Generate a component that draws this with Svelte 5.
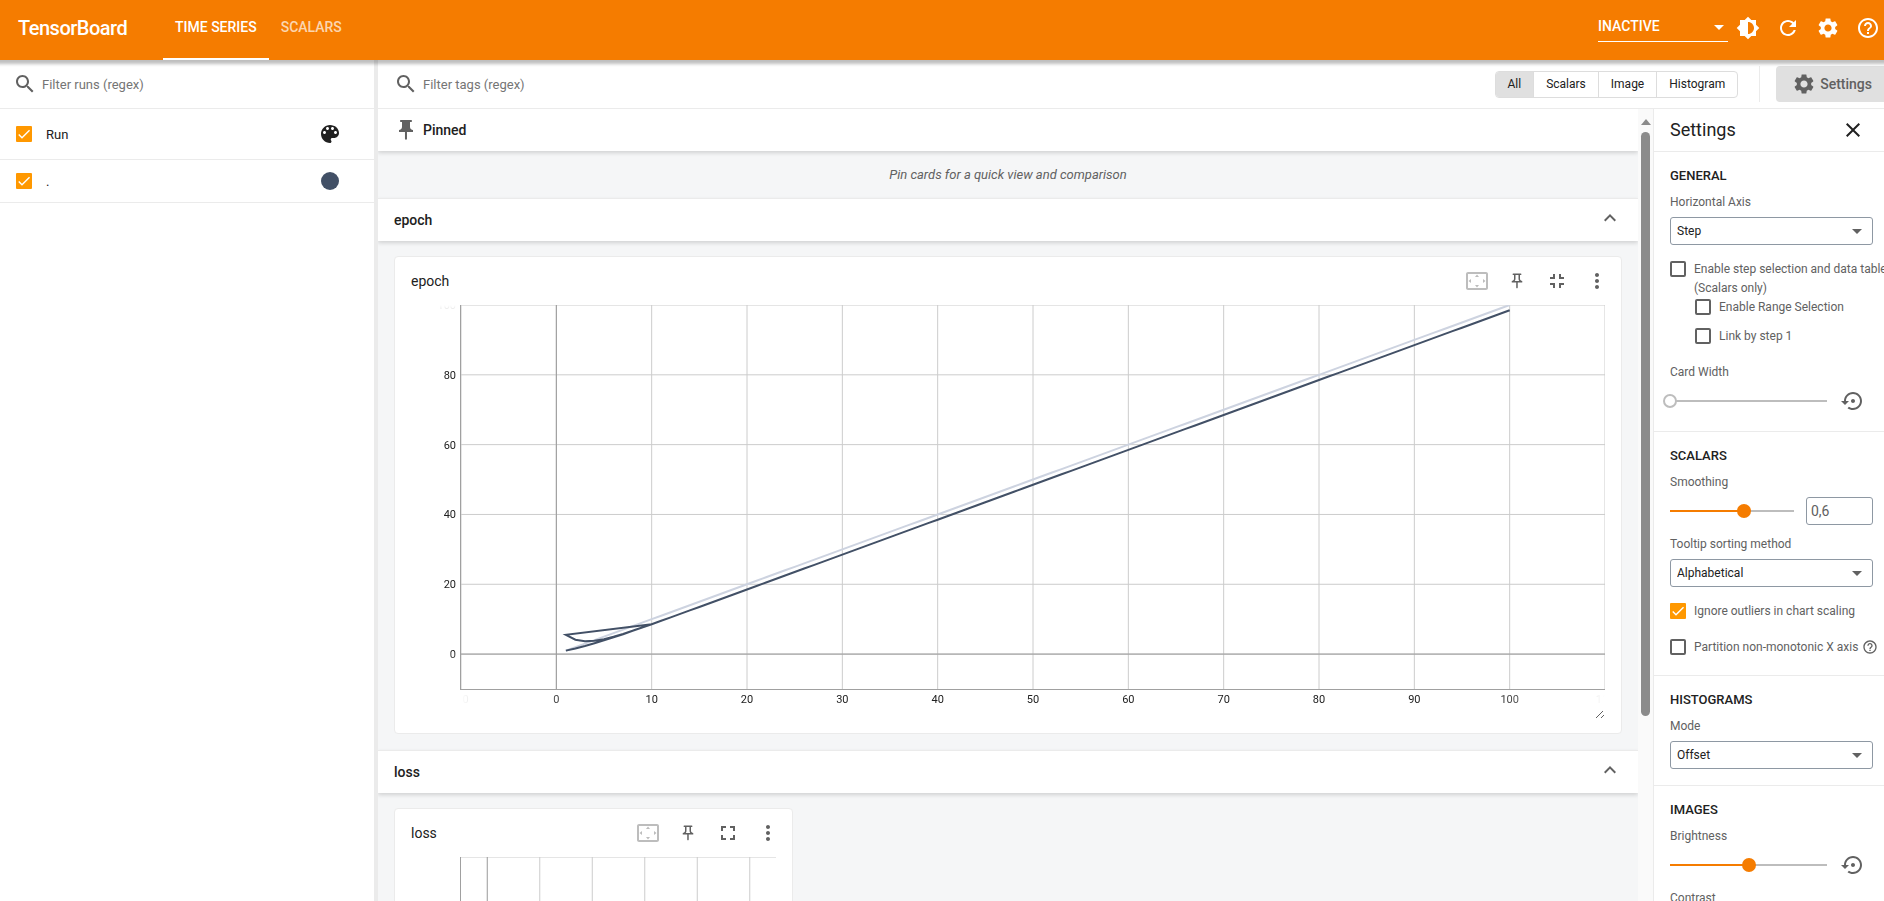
<script>
  const icons = {
    search: 'M15.5 14h-.79l-.28-.27C15.41 12.59 16 11.11 16 9.5 16 5.91 13.09 3 9.5 3S3 5.91 3 9.5 5.91 16 9.5 16c1.61 0 3.09-.59 4.23-1.57l.27.28v.79l5 4.99L20.49 19l-4.99-5zm-6 0C7.01 14 5 11.99 5 9.5S7.01 5 9.5 5 14 7.01 14 9.5 11.99 14 9.5 14z',
    brightness: 'M20 15.31L23.31 12 20 8.69V4h-4.69L12 .69 8.69 4H4v4.69L.69 12 4 15.31V20h4.69L12 23.31 15.31 20H20v-4.69zM12 18V6c3.31 0 6 2.69 6 6s-2.69 6-6 6z',
    refresh: 'M17.65 6.35C16.2 4.9 14.21 4 12 4c-4.42 0-7.99 3.58-7.99 8s3.57 8 7.99 8c3.73 0 6.84-2.55 7.73-6h-2.08c-.82 2.33-3.04 4-5.65 4-3.31 0-6-2.69-6-6s2.69-6 6-6c1.66 0 3.14.69 4.22 1.78L13 11h7V4l-2.35 2.35z',
    gear: 'M19.14 12.94c.04-.3.06-.61.06-.94 0-.32-.02-.64-.07-.94l2.03-1.58c.18-.14.23-.41.12-.61l-1.92-3.32c-.12-.22-.37-.29-.59-.22l-2.39.96c-.5-.38-1.03-.7-1.62-.94l-.36-2.54c-.04-.24-.24-.41-.48-.41h-3.84c-.24 0-.43.17-.47.41l-.36 2.54c-.59.24-1.13.57-1.62.94l-2.39-.96c-.22-.08-.47 0-.59.22L2.74 8.87c-.12.21-.08.47.12.61l2.03 1.58c-.05.3-.09.63-.09.94s.02.64.07.94l-2.03 1.58c-.18.14-.23.41-.12.61l1.92 3.32c.12.22.37.29.59.22l2.39-.96c.5.38 1.03.7 1.62.94l.36 2.54c.05.24.24.41.48.41h3.84c.24 0 .44-.17.47-.41l.36-2.54c.59-.24 1.13-.56 1.62-.94l2.39.96c.22.08.47 0 .59-.22l1.92-3.32c.12-.22.07-.47-.12-.61l-2.01-1.58zM12 15.6c-1.98 0-3.6-1.62-3.6-3.6s1.62-3.6 3.6-3.6 3.6 1.62 3.6 3.6-1.62 3.6-3.6 3.6z',
    help: 'M11 18h2v-2h-2v2zm1-16C6.48 2 2 6.48 2 12s4.48 10 10 10 10-4.48 10-10S17.52 2 12 2zm0 18c-4.41 0-8-3.59-8-8s3.59-8 8-8 8 3.59 8 8-3.59 8-8 8zm0-14c-2.21 0-4 1.79-4 4h2c0-1.1.9-2 2-2s2 .9 2 2c0 2-3 1.75-3 5h2c0-2.25 3-2.5 3-5 0-2.21-1.79-4-4-4z',
    palette: 'M12 3c-4.97 0-9 4.03-9 9s4.03 9 9 9c.83 0 1.5-.67 1.5-1.5 0-.39-.15-.74-.39-1.01-.23-.26-.38-.61-.38-.99 0-.83.67-1.5 1.5-1.5H16c2.76 0 5-2.24 5-5 0-4.42-4.03-8-9-8zm-5.5 9c-.83 0-1.5-.67-1.5-1.5S5.67 9 6.5 9 8 9.67 8 10.5 7.33 12 6.5 12zm3-4C8.67 8 8 7.33 8 6.5S8.67 5 9.5 5s1.5.67 1.5 1.5S10.33 8 9.5 8zm5 0c-.83 0-1.5-.67-1.5-1.5S13.67 5 14.5 5s1.5.67 1.5 1.5S15.33 8 14.5 8zm3 4c-.83 0-1.5-.67-1.5-1.5S16.67 9 17.5 9s1.5.67 1.5 1.5-.67 1.5-1.5 1.5z',
    pinFilled: 'M16 9V4h1c.55 0 1-.45 1-1s-.45-1-1-1H7c-.55 0-1 .45-1 1s.45 1 1 1h1v5c0 1.66-1.34 3-3 3v2h5.97v7l1 1 1-1v-7H19v-2c-1.66 0-3-1.34-3-3z',
    pin: 'M14 4v5c0 1.12.37 2.16 1 3H9c.65-.86 1-1.9 1-3V4h4m3-2H7c-.55 0-1 .45-1 1s.45 1 1 1h1v5c0 1.66-1.34 3-3 3v2h5.97v7l1 1 1-1v-7H19v-2c-1.66 0-3-1.34-3-3V4h1c.55 0 1-.45 1-1s-.45-1-1-1z',
    fit: 'M12.01 5.5L10 8h4l-1.99-2.5zM18 10v4l2.5-1.99L18 10zM6 10l-2.5 2.01L6 14v-4zm8 6h-4l2.01 2.5L14 16zm7-13H3c-1.1 0-2 .9-2 2v14c0 1.1.9 2 2 2h18c1.1 0 2-.9 2-2V5c0-1.1-.9-2-2-2zm0 16.01H3V4.99h18v14.02z',
    expand: 'M7 14H5v5h5v-2H7v-3zm-2-4h2V7h3V5H5v5zm12 7h-3v2h5v-5h-2v3zM14 5v2h3v3h2V5h-5z',
    collapse: 'M5 16h3v3h2v-5H5v2zm3-8H5v2h5V5H8v3zm6 11h2v-3h3v-2h-5v5zm2-11V5h-2v5h5V8h-3z',
    more: 'M12 8c1.1 0 2-.9 2-2s-.9-2-2-2-2 .9-2 2 .9 2 2 2zm0 2c-1.1 0-2 .9-2 2s.9 2 2 2 2-.9 2-2-.9-2-2-2zm0 6c-1.1 0-2 .9-2 2s.9 2 2 2 2-.9 2-2-.9-2-2-2z',
    up: 'M12 8l-6 6 1.41 1.41L12 10.83l4.59 4.58L18 14z',
    close: 'M19 6.41L17.59 5 12 10.59 6.41 5 5 6.41 10.59 12 5 17.59 6.41 19 12 13.41 17.59 19 19 17.59 13.41 12z',
    reset: 'M14 12c0-1.1-.9-2-2-2s-2 .9-2 2 .9 2 2 2 2-.9 2-2zm-2-9c-4.97 0-9 4.03-9 9H0l4 4 4-4H5c0-3.87 3.13-7 7-7s7 3.13 7 7-3.13 7-7 7c-1.51 0-2.91-.49-4.06-1.3l-1.42 1.44C8.04 20.3 9.94 21 12 21c4.97 0 9-4.03 9-9s-4.03-9-9-9z'
  };

  const plotHeight = 384;
  let epochWidth = $state(1145);
  let lossWidth = $state(317);

  let smoothing = $state(0.6);
  let brightness = $state(50);
  let cardWidth = $state(0);
  let activeType = $state('All');
  const types = ['All', 'Scalars', 'Image', 'Histogram'];

  // Two consecutive sessions logged to the same run: epochs 1-10, then 1-100.
  const epochs = [
    ...Array.from({ length: 10 }, (_, i) => i + 1),
    ...Array.from({ length: 100 }, (_, i) => i + 1)
  ];

  function smooth(values, weight) {
    let last = 0;
    return values.map((v, i) => {
      last = last * weight + (1 - weight) * v;
      return last / (1 - Math.pow(weight, i + 1));
    });
  }

  const xTicks = [-10, 0, 10, 20, 30, 40, 50, 60, 70, 80, 90, 100, 110];
  const yTicks = [0, 20, 40, 60, 80, 100];
  const ex = (v) => ((v + 10) / 120) * epochWidth;
  const ey = (v) => ((100 - v) / 110) * plotHeight;
  const toPath = (values) =>
    values.map((v, i) => `${i ? 'L' : 'M'}${ex(epochs[i]).toFixed(2)} ${ey(v).toFixed(2)}`).join('');

  let rawPath = $derived(toPath(epochs));
  let smoothPath = $derived(toPath(smooth(epochs, Number(smoothing))));
  const lossTicks = [0, 1, 2, 3, 4, 5];
</script>

{#snippet icon(name, size = 24)}
  <svg class="icon" width={size} height={size} viewBox="0 0 24 24" aria-hidden="true"><path d={icons[name]} /></svg>
{/snippet}

{#snippet cardHeader(title, full)}
  <div class="card-header">
    <h3>{title}</h3>
    <button class="card-action faded" aria-label="Fit to data" disabled>{@render icon('fit')}</button>
    <button class="card-action" aria-label="Pin card">{@render icon('pin', 18)}</button>
    <button class="card-action" aria-label="Toggle size">{@render icon(full ? 'collapse' : 'expand')}</button>
    <button class="card-action" aria-label="More options">{@render icon('more')}</button>
  </div>
{/snippet}

{#snippet groupHeader(title)}
  <div class="group-header">
    <h2>{title}</h2>
    <button class="chevron" aria-label="Collapse group">{@render icon('up')}</button>
  </div>
{/snippet}

<div class="app">
  <header class="topbar">
    <span class="brand">TensorBoard</span>
    <nav class="tabs">
      <a class="tab current" href="#timeseries">TIME SERIES</a>
      <a class="tab" href="#scalars">SCALARS</a>
    </nav>
    <select class="plugins" aria-label="Inactive plugins"><option>INACTIVE</option></select>
    <div class="top-actions">
      <button aria-label="Theme">{@render icon('brightness')}</button>
      <button aria-label="Reload">{@render icon('refresh')}</button>
      <button aria-label="Preferences">{@render icon('gear')}</button>
      <button aria-label="Help">{@render icon('help')}</button>
    </div>
  </header>

  <div class="body">
    <aside class="runs">
      <label class="filter">
        {@render icon('search')}
        <input type="text" placeholder="Filter runs (regex)" />
      </label>
      <div class="run head">
        <input type="checkbox" id="run-all" checked />
        <label for="run-all">Run</label>
        <button class="palette" aria-label="Color runs">{@render icon('palette')}</button>
      </div>
      <div class="run">
        <input type="checkbox" id="run-dot" checked />
        <label for="run-dot">.</label>
        <button class="swatch" aria-label="Run color"></button>
      </div>
    </aside>

    <div class="workspace">
      <div class="toolbar">
        <label class="filter">
          {@render icon('search')}
          <input type="text" placeholder="Filter tags (regex)" />
        </label>
        <div class="types">
          {#each types as type}
            <button class:selected={type === activeType} onclick={() => (activeType = type)}>{type}</button>
          {/each}
        </div>
        <div class="settings-slot">
          <button class="settings-toggle">{@render icon('gear')}Settings</button>
        </div>
      </div>

      <div class="content">
        <main class="cards">
          <div class="group-header pinned">
            {@render icon('pinFilled')}
            <h2>Pinned</h2>
          </div>
          <p class="empty">Pin cards for a quick view and comparison</p>

          {@render groupHeader('epoch')}
          <div class="grid">
            <article class="card wide">
              {@render cardHeader('epoch', true)}
              <div class="chart">
                <svg class="y-axis" width="64" height={plotHeight}>
                  {#each yTicks as t}
                    <text x="60" y={ey(t) + 4} text-anchor="end">{t}</text>
                  {/each}
                </svg>
                <div class="plot" bind:clientWidth={epochWidth}>
                  <svg width="100%" height={plotHeight}>
                    {#each xTicks as t}
                      <line class="grid-line" x1={ex(t)} x2={ex(t)} y1="0" y2={plotHeight} />
                    {/each}
                    {#each yTicks as t}
                      <line class="grid-line" x1="0" x2={epochWidth} y1={ey(t)} y2={ey(t)} />
                    {/each}
                    <line class="zero" x1={ex(0)} x2={ex(0)} y1="0" y2={plotHeight} />
                    <line class="zero" x1="0" x2={epochWidth} y1={ey(0)} y2={ey(0)} />
                    <path class="raw" d={rawPath} />
                    <path class="smoothed" d={smoothPath} />
                  </svg>
                </div>
                <svg class="x-axis" width="100%" height="20">
                  {#each xTicks as t}
                    <text x={ex(t) + 1} y="14" text-anchor="middle">{t}</text>
                  {/each}
                </svg>
              </div>
              <div class="resize">
                <svg width="10" height="10" viewBox="0 0 10 10" aria-hidden="true"><path d="M1 9L8 2M6 9L9 6" /></svg>
              </div>
            </article>
          </div>

          {@render groupHeader('loss')}
          <div class="grid">
            <article class="card">
              {@render cardHeader('loss', false)}
              <div class="chart">
                <span></span>
                <div class="plot" bind:clientWidth={lossWidth}>
                  <svg width="100%" height={plotHeight}>
                    <line class="grid-line" x1="0" x2={lossWidth} y1="0" y2="0" />
                    {#each lossTicks as t}
                      <line
                        class={t === 0 ? 'zero' : 'grid-line'}
                        x1={lossWidth * (t * 2 + 1) / 12}
                        x2={lossWidth * (t * 2 + 1) / 12}
                        y1="0"
                        y2={plotHeight}
                      />
                    {/each}
                  </svg>
                </div>
              </div>
            </article>
          </div>
        </main>

        <div class="scrollbar" aria-hidden="true">
          <svg width="10" height="6" viewBox="0 0 10 6"><path d="M0 6L5 0L10 6z" /></svg>
          <div class="thumb"></div>
          <div class="rest"></div>
        </div>

        <aside class="settings">
          <div class="settings-head">
            <h2>Settings</h2>
            <button aria-label="Close settings">{@render icon('close', 24)}</button>
          </div>

          <section>
            <h3>GENERAL</h3>
            <label class="caption" for="axis">Horizontal Axis</label>
            <select id="axis"><option>Step</option></select>
            <div class="check two-line">
              <input type="checkbox" id="step-select" />
              <label for="step-select">Enable step selection and data table<br />(Scalars only)</label>
            </div>
            <div class="check nested">
              <input type="checkbox" id="range-select" />
              <label for="range-select">Enable Range Selection</label>
            </div>
            <div class="check nested second">
              <input type="checkbox" id="link-step" />
              <label for="link-step">Link by step 1</label>
            </div>
            <label class="caption spaced" for="card-width">Card Width</label>
            <div class="slider-row">
              <input class="hollow" type="range" id="card-width" min="0" max="100" bind:value={cardWidth} style="--fill: {cardWidth / 100}" />
              <button aria-label="Reset card width">{@render icon('reset')}</button>
            </div>
          </section>

          <section class="scalars">
            <h3>SCALARS</h3>
            <label class="caption" for="smoothing">Smoothing</label>
            <div class="slider-row">
              <input type="range" id="smoothing" min="0" max="1" step="0.01" bind:value={smoothing} style="--fill: {smoothing}" />
              <input class="number" type="text" aria-label="Smoothing value" value={String(smoothing).replace('.', ',')} />
            </div>
            <label class="caption next" for="tooltip-sort">Tooltip sorting method</label>
            <select id="tooltip-sort"><option>Alphabetical</option></select>
            <div class="check">
              <input type="checkbox" id="outliers" checked />
              <label for="outliers">Ignore outliers in chart scaling</label>
            </div>
            <div class="check partition">
              <input type="checkbox" id="partition" />
              <label for="partition">Partition non-monotonic X axis</label>
              {@render icon('help', 16)}
            </div>
          </section>

          <section>
            <h3>HISTOGRAMS</h3>
            <label class="caption" for="mode">Mode</label>
            <select id="mode"><option>Offset</option></select>
          </section>

          <section>
            <h3>IMAGES</h3>
            <label class="caption" for="brightness">Brightness</label>
            <div class="slider-row">
              <input type="range" id="brightness" min="0" max="100" bind:value={brightness} style="--fill: {brightness / 100}" />
              <button aria-label="Reset brightness">{@render icon('reset')}</button>
            </div>
            <label class="caption next" for="contrast">Contrast</label>
            <div class="slider-row">
              <input type="range" id="contrast" min="0" max="100" value="50" style="--fill: 0.5" />
              <button aria-label="Reset contrast">{@render icon('reset')}</button>
            </div>
          </section>
        </aside>
      </div>
    </div>
  </div>
</div>

<style>
  :global(body) {
    margin: 0;
    overflow: hidden;
  }

  .app {
    display: flex;
    flex-direction: column;
    height: 100vh;
    overflow: hidden;
    font-family: Roboto, sans-serif;
    font-size: 13px;
    color: #212121;
    background: #fff;
  }

  .app * {
    box-sizing: border-box;
  }

  button,
  input,
  select {
    font: inherit;
    color: inherit;
    margin: 0;
  }

  button {
    display: flex;
    align-items: center;
    justify-content: center;
    padding: 0;
    border: 0;
    background: none;
  }

  h2,
  h3,
  p {
    margin: 0;
  }

  .icon {
    display: block;
    flex: none;
    fill: currentColor;
  }

  .topbar {
    position: relative;
    z-index: 2;
    display: flex;
    flex: none;
    align-items: center;
    height: 60px;
    padding: 0 4px 4px 18px;
    color: #fff;
    background: #f57c00;
    box-shadow: 0 1px 3px 3px rgba(0, 0, 0, 0.25);
  }

  .brand {
    width: 145px;
    font-size: 20px;
    font-weight: 500;
    letter-spacing: -0.025em;
  }

  .tabs {
    display: flex;
    flex: 1;
    align-self: stretch;
    margin-bottom: -4px;
  }

  .tab {
    display: flex;
    align-items: center;
    padding: 0 12px 4px;
    border-bottom: 2px solid transparent;
    font-size: 14px;
    font-weight: 500;
    text-decoration: none;
    color: rgba(255, 255, 255, 0.7);
  }

  .tab.current {
    color: #fff;
    border-color: #fff;
  }

  .plugins {
    width: 130px;
    height: 28px;
    margin-right: 8px;
    padding: 0 0 3px;
    border: 0;
    border-bottom: 1px solid #fff;
    border-radius: 0;
    appearance: none;
    font-size: 14px;
    font-weight: 500;
    background: url("data:image/svg+xml,%3Csvg xmlns='http://www.w3.org/2000/svg' width='10' height='5'%3E%3Cpath d='M0 0h10L5 5z' fill='white'/%3E%3C/svg%3E") no-repeat right 4px center;
  }

  .top-actions {
    display: flex;
    gap: 16px;
  }

  .body {
    display: flex;
    flex: 1;
    min-height: 0;
  }

  .runs {
    flex: none;
    width: 378px;
    border-right: 4px solid #ebebeb;
  }

  .filter {
    display: flex;
    flex: 1;
    align-items: center;
    gap: 5px;
    color: #616161;
  }

  .filter input {
    flex: 1;
    min-width: 0;
    padding: 0;
    border: 0;
    outline: 0;
    background: none;
  }

  .filter input::placeholder {
    color: #757575;
    opacity: 1;
  }

  .runs .filter {
    height: 49px;
    padding: 0 13px;
    border-bottom: 1px solid #ebebeb;
  }

  .run {
    display: flex;
    align-items: center;
    height: 43px;
    padding: 0 32px 0 16px;
    border-bottom: 1px solid #ebebeb;
  }

  .run.head {
    height: 51px;
  }

  .run label {
    flex: 1;
    padding-left: 14px;
  }

  .swatch {
    width: 18px;
    height: 18px;
    margin-right: 3px;
    border-radius: 50%;
    background: #425066;
  }

  input[type='checkbox'] {
    flex: none;
    width: 16px;
    height: 16px;
    border: 2px solid #616161;
    border-radius: 2px;
    appearance: none;
    background: #fff;
  }

  input[type='checkbox']:checked {
    border: 0;
    border-radius: 1px;
    background: #ff9800 url("data:image/svg+xml,%3Csvg xmlns='http://www.w3.org/2000/svg' viewBox='0 0 24 24'%3E%3Cpath d='M4.1 12.7L9 17.6 20.3 6.3' fill='none' stroke='white' stroke-width='2.13'/%3E%3C/svg%3E") center / 16px no-repeat;
  }

  .workspace {
    display: flex;
    flex: 1;
    flex-direction: column;
    min-width: 0;
  }

  .toolbar {
    display: flex;
    flex: none;
    align-items: center;
    height: 49px;
    padding-left: 16px;
    border-bottom: 1px solid #ebebeb;
  }

  .types {
    display: flex;
    overflow: hidden;
    border: 1px solid #ddd;
    border-radius: 4px;
    font-size: 12px;
  }

  .types button {
    height: 25px;
    padding: 0 12px;
  }

  .types button + button {
    border-left: 1px solid #ddd;
  }

  .types .selected {
    background: #e0e0e0;
  }

  .settings-slot {
    margin-left: 21px;
    padding-left: 16px;
    border-left: 1px solid #ebebeb;
  }

  .settings-toggle {
    gap: 4px;
    height: 36px;
    padding: 0 12px 0 16px;
    border-radius: 4px 0 0 4px;
    font-size: 14px;
    font-weight: 500;
    color: #616161;
    background: #e0e0e0;
  }

  .content {
    display: flex;
    flex: 1;
    min-height: 0;
  }

  .cards {
    flex: 1;
    min-width: 0;
    overflow: hidden;
    background: #f5f6f7;
  }

  .group-header {
    position: relative;
    display: flex;
    align-items: center;
    justify-content: space-between;
    height: 43px;
    padding: 0 16px;
    border-top: 1px solid #ebebeb;
    background: #fff;
    box-shadow: 0 2px 4px rgba(0, 0, 0, 0.15);
  }

  .group-header.pinned {
    justify-content: flex-start;
    gap: 5px;
    height: 42px;
    border-top: 0;
    color: #616161;
  }

  .group-header h2 {
    font-size: 14px;
    font-weight: 500;
    color: #212121;
  }

  .chevron {
    padding-bottom: 4px;
    color: #616161;
  }

  .empty {
    padding: 16px 0 15px;
    font-style: italic;
    line-height: 16px;
    text-align: center;
    color: #616161;
  }

  .grid {
    display: grid;
    grid-template-columns: repeat(auto-fill, minmax(335px, 1fr));
    gap: 16px;
    padding: 15px 16px 16px;
  }

  .card {
    min-width: 0;
    padding-bottom: 14px;
    border: 1px solid #ebebeb;
    border-radius: 4px;
    background: #fff;
  }

  .card.wide {
    grid-column: 1 / -1;
  }

  .card-header {
    display: flex;
    align-items: center;
    height: 48px;
    padding: 0 4px 0 16px;
  }

  .card-header h3 {
    flex: 1;
    font-size: 14px;
    font-weight: 400;
  }

  .card-action {
    width: 40px;
    height: 40px;
    color: #616161;
  }

  .card-action.faded {
    color: #bdbdbd;
  }

  .chart {
    display: grid;
    grid-template-columns: 64px minmax(0, 1fr);
    padding: 0 16px 0 1px;
  }

  .chart svg {
    display: block;
  }

  .chart text {
    font-size: 11px;
    fill: #212121;
  }

  .plot {
    border-left: 1px solid #a0a0a0;
    border-bottom: 1px solid #a0a0a0;
    margin-bottom: -1px;
  }

  .y-axis {
    mask-image: linear-gradient(to bottom, transparent, #000 10%, #000 90%, transparent);
  }

  .x-axis {
    grid-column: 2;
    mask-image: linear-gradient(to right, transparent, #000 10%, #000 90%, transparent);
  }

  .grid-line {
    stroke: #ccc;
  }

  .zero {
    stroke: #999;
  }

  .raw,
  .smoothed {
    fill: none;
    stroke-width: 2;
  }

  .raw {
    stroke: #cdd3e0;
  }

  .smoothed {
    stroke: #425066;
  }

  .resize {
    display: flex;
    justify-content: flex-end;
    padding: 0 16px 0 0;
  }

  .resize path {
    fill: none;
    stroke: #616161;
  }

  .scrollbar {
    display: flex;
    flex: none;
    flex-direction: column;
    align-items: center;
    width: 15px;
    padding: 10px 0;
    background: #fafafa;
  }

  .scrollbar svg {
    flex: none;
    margin-bottom: 7px;
    fill: #8b8b8b;
  }

  .thumb {
    flex: 584;
    width: 9px;
    border-radius: 5px;
    background: #8b8b8b;
  }

  .rest {
    flex: 175;
  }

  .settings {
    flex: none;
    width: 231px;
    overflow: hidden;
    border-left: 1px solid #ebebeb;
    font-size: 12px;
    color: #616161;
  }

  .settings-head {
    display: flex;
    align-items: center;
    justify-content: space-between;
    height: 42px;
    padding: 0 19px 0 16px;
    color: #212121;
  }

  .settings-head h2 {
    padding-bottom: 1px;
    font-size: 18px;
    font-weight: 400;
  }

  .settings section {
    display: flex;
    flex-direction: column;
    padding: 16px 11px 16px 16px;
    border-top: 1px solid #ebebeb;
  }

  .settings section.scalars {
    padding-bottom: 20px;
  }

  .settings section h3 {
    margin-bottom: 10px;
    font-size: 13px;
    font-weight: 500;
    line-height: 16px;
    color: #212121;
  }

  .caption {
    margin-bottom: 7px;
    line-height: 16px;
  }

  .caption.spaced {
    margin-top: 20px;
  }

  .caption.next {
    margin-top: 11px;
  }

  .settings select,
  .number {
    height: 28px;
    padding: 0 6px;
    border: 1px solid #8e98a3;
    border-radius: 3px;
    appearance: none;
    background: #fff;
  }

  .settings select {
    color: #212121;
    background: #fff url("data:image/svg+xml,%3Csvg xmlns='http://www.w3.org/2000/svg' width='10' height='5'%3E%3Cpath d='M0 0h10L5 5z' fill='%23616161'/%3E%3C/svg%3E") no-repeat right 10px center;
  }

  .slider-row .number {
    flex: none;
    width: 67px;
    margin-left: 5px;
    padding: 0 4px;
    font-size: 14px;
  }

  .check {
    display: flex;
    gap: 8px;
    align-items: center;
    margin-top: 16px;
    line-height: 16px;
    white-space: nowrap;
  }

  .check.two-line {
    align-items: flex-start;
    margin-top: 15px;
    line-height: 19px;
  }

  .check.two-line input {
    margin-top: 1px;
  }

  .check.nested {
    margin: 1px 0 0 25px;
  }

  .check.nested.second {
    margin-top: 13px;
  }

  .check.partition {
    margin-top: 20px;
  }

  .check.partition .icon {
    margin-left: -4px;
  }

  .slider-row {
    display: flex;
    align-items: center;
    height: 28px;
  }

  .slider-row button {
    margin: 0 8px 0 7px;
  }

  input[type='range'] {
    flex: 1;
    min-width: 0;
    height: 14px;
    margin: 0 0 0 -7px;
    appearance: none;
    background:
      linear-gradient(#f57c00, #f57c00) 7px 6px / calc((100% - 14px) * var(--fill)) 2px no-repeat,
      linear-gradient(to right, transparent 7px, #bdbdbd 7px, #bdbdbd calc(100% - 7px), transparent calc(100% - 7px)) 0 6px / 100% 2px no-repeat;
  }

  input[type='range']::-webkit-slider-thumb {
    width: 14px;
    height: 14px;
    border-radius: 50%;
    appearance: none;
    background: #f57c00;
  }

  input[type='range'].hollow::-webkit-slider-thumb {
    border: 2px solid #bdbdbd;
    background: #fff;
  }
</style>
